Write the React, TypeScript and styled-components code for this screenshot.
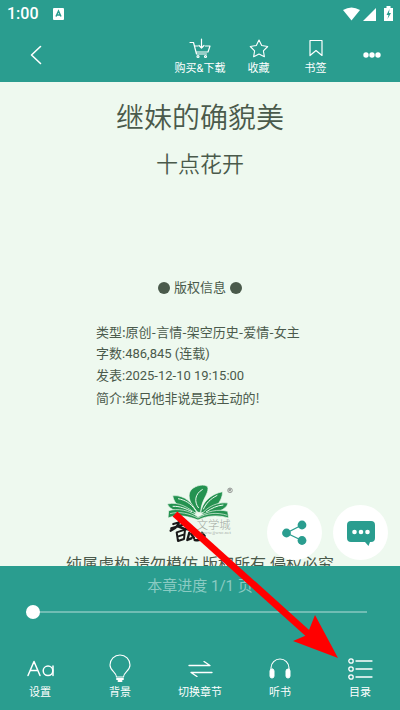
import React from 'react';
import styled, { createGlobalStyle } from 'styled-components';

const TEAL = '#2a9d8f';
const INK = '#4a5a4b';

const GlobalStyle = createGlobalStyle`
  * { box-sizing: border-box; }
  html, body { margin: 0; padding: 0; }
  body {
    background: #eef9ef;
    font-family: Roboto, "Noto Sans CJK SC", sans-serif;
  }
  button { font: inherit; color: inherit; background: none; border: 0; padding: 0; margin: 0; cursor: pointer; }
  svg { display: block; }
`;

const Page = styled.div`
  position: relative;
  height: 100vh;
  display: flex;
  flex-direction: column;
  overflow: hidden;
  background: #eef9ef;
  color: ${INK};
`;

const TopPanel = styled.header`
  flex: none;
  background: ${TEAL};
  color: #fff;
`;

const StatusBar = styled.div`
  height: 28px;
  padding: 0 6px 0 7px;
  display: flex;
  align-items: center;
  gap: 14px;
`;

const Clock = styled.time`
  font-size: 16px;
  line-height: 28px;
  font-weight: 500;
`;

const StatusIcons = styled.div`
  margin-left: auto;
`;

const Toolbar = styled.nav`
  height: 54px;
  display: flex;
  align-items: stretch;
`;

const BackButton = styled.button`
  width: 72px;
  display: grid;
  place-items: center;
  margin-right: auto;
`;

const ToolbarAction = styled.button<{ $width: number }>`
  width: ${(p) => p.$width}px;
  display: flex;
  flex-direction: column;
  align-items: center;
  justify-content: flex-start;
  gap: 1px;
  padding-top: 10px;
  font-size: 11px;
  line-height: 18px;
  white-space: nowrap;
`;

const MoreButton = styled.button`
  width: 56px;
  display: grid;
  place-items: center;
`;

const Reader = styled.main`
  flex: 1;
  min-height: 0;
  overflow: hidden;
  display: flex;
  flex-direction: column;
  align-items: center;
`;

const Title = styled.h1`
  margin: 16px 0 0;
  font-size: 28px;
  line-height: 42px;
  font-weight: 350;
`;

const Author = styled.h2`
  margin: 9px 0 0;
  font-size: 22px;
  line-height: 32px;
  font-weight: 350;
`;

const Copyright = styled.h3`
  margin: 96px 0 0;
  display: flex;
  align-items: center;
  gap: 4px;
  font-size: 13px;
  line-height: 22px;
  font-weight: 400;
`;

const Dot = styled.i`
  width: 12px;
  height: 12px;
  border-radius: 50%;
  background: ${INK};
`;

const Details = styled.div`
  margin-top: 22px;
  align-self: stretch;
  padding: 0 24%;
  font-size: 13px;
  line-height: 22px;
  white-space: nowrap;
`;

const Detail = styled.p<{ $numeric?: boolean }>`
  margin: 0;
  font-family: ${(p) => (p.$numeric ? 'Roboto, ' : '')}"Noto Sans CJK SC", sans-serif;
`;

const Brand = styled.div`
  margin: 71px 0 0 3px;
`;

const Notice = styled.p`
  margin: 4px 0 0;
  font-size: 16px;
  line-height: 22px;
  white-space: nowrap;
`;

const Floating = styled.div`
  position: absolute;
  right: 12px;
  bottom: 150px;
  display: flex;
  gap: 11px;
`;

const RoundButton = styled.button`
  width: 55px;
  height: 55px;
  border-radius: 50%;
  background: #fff;
  display: grid;
  place-items: center;
`;

const BottomPanel = styled.footer`
  flex: none;
  background: ${TEAL};
  color: #fff;
  padding-bottom: 8px;
`;

const ProgressLabel = styled.label`
  display: block;
  padding-top: 8px;
  text-align: center;
  font-size: 15px;
  line-height: 24px;
  color: #8acbc3;
`;

const ProgressRow = styled.div`
  padding: 7px 33px 0 26px;
`;

const Slider = styled.input`
  display: block;
  appearance: none;
  width: 100%;
  height: 14px;
  margin: 0;
  background: linear-gradient(#70bdb4, #70bdb4) center / 100% 2px no-repeat;
  &::-webkit-slider-thumb {
    appearance: none;
    width: 14px;
    height: 14px;
    border-radius: 50%;
    background: #fff;
  }
`;

const Tabs = styled.nav`
  display: grid;
  grid-template-columns: repeat(5, 1fr);
  margin-top: 34px;
`;

const Tab = styled.button`
  display: flex;
  flex-direction: column;
  align-items: center;
  font-size: 11px;
  line-height: 18px;
`;

const TabIcon = styled.span`
  height: 31px;
  display: grid;
  place-items: center;
`;

const Pointer = styled.svg`
  position: absolute;
  right: 54px;
  bottom: 50px;
  pointer-events: none;
`;

const line = { fill: 'none', stroke: '#fff', strokeLinecap: 'round', strokeLinejoin: 'round' } as const;

const InputBadge = () => (
  <svg width="11" height="12" viewBox="0 0 11 12">
    <rect width="11" height="12" rx="1" fill="#fff" />
    <path d="M3 8.500 5.500 3 8 8.500M4 7h3" fill="none" stroke={TEAL} strokeWidth="1.500" />
  </svg>
);

const SystemIcons = () => (
  <svg width="52" height="16" viewBox="0 0 52 16" fill="#fff">
    <path d="M1 4Q9.500-1 18 4L9.500 14.500Z" />
    <path d="M34 2V15H21Z" />
    <path d="M44.500 0h4v2h2.500v13h-9V2h2.500Z" />
    <path d="m47.500 3-3 6h2l-1 4 3.500-6h-2Z" fill={TEAL} />
  </svg>
);

const CartIcon = () => (
  <svg width="22" height="21" viewBox="0 0 22 21" {...line} strokeWidth="1.200">
    <path d="M1 4.500h3.500l3 11.500h10M6 8h3M16.500 8H21l-2 6H7" />
    <path d="M12.500 1v8.500M10 7.500l2.500 2.500L15 7.500" />
    <circle cx="9" cy="18.500" r="1" /><circle cx="16.500" cy="18.500" r="1" />
  </svg>
);

const StarIcon = () => (
  <svg width="20" height="21" viewBox="0 0 20 21" {...line} strokeWidth="1.100">
    <path d="m10 2 2.700 5.500 6 1-4.300 4.300 1 6L10 16l-5.400 2.800 1-6L1.300 8.500l6-1Z" />
  </svg>
);

const BookmarkIcon = () => (
  <svg width="14" height="21" viewBox="0 0 14 21" {...line} strokeWidth="1.200">
    <path d="M1 2.500h12v15L7 12.500 1 17.500Z" />
  </svg>
);

const ShareIcon = () => (
  <svg width="26" height="26" viewBox="0 0 26 26" fill={TEAL}>
    <path d="M20 5 4.500 13 20 20.500" fill="none" stroke={TEAL} strokeWidth="1.300" />
    <circle cx="4.500" cy="13" r="4.400" /><circle cx="20" cy="5" r="4.400" /><circle cx="20" cy="20.500" r="4.400" />
  </svg>
);

const ChatIcon = () => (
  <svg width="28" height="26" viewBox="0 0 28 26">
    <path d="M4 1h20a4 4 0 0 1 4 4v13a4 4 0 0 1-4 4h-1l-1.500 4-3.500-4H4a4 4 0 0 1-4-4V5a4 4 0 0 1 4-4Z" fill={TEAL} />
    <g fill="#fff"><circle cx="7.500" cy="12" r="2.300" /><circle cx="14" cy="12" r="2.300" /><circle cx="20.500" cy="12" r="2.300" /></g>
  </svg>
);

const TypeIcon = () => (
  <svg width="27" height="17" viewBox="0 0 27 17" {...line} strokeWidth="1.500">
    <path d="m1 15.500 6-14 6 14M3.500 10.500h7M26 6v9.500" />
    <circle cx="21" cy="10.800" r="4.800" />
  </svg>
);

const BulbIcon = () => (
  <svg width="22" height="29" viewBox="0 0 22 29" {...line} strokeWidth="1.100">
    <path d="M7.500 23c0-5-6.500-6-6.500-12a10 10 0 0 1 20 0c0 6-6.500 7-6.500 12Z" />
    <path d="M8 25h6M9.500 27h3" strokeWidth="2" />
  </svg>
);

const SwapIcon = () => (
  <svg width="25" height="16" viewBox="0 0 25 16" {...line} strokeWidth="1.300">
    <path d="M1 4.500h21l-6-4M24 11.500H3l6 4" />
  </svg>
);

const HeadphonesIcon = () => (
  <svg width="22" height="21" viewBox="0 0 22 21" {...line}>
    <path d="M2 13v-3a9 9 0 0 1 18 0v3" strokeWidth="1.100" />
    <rect x="1" y="11" width="4" height="9" rx="2" fill="#fff" />
    <rect x="17" y="11" width="4" height="9" rx="2" fill="#fff" />
  </svg>
);

const ListIcon = () => (
  <svg width="25" height="22" viewBox="0 0 25 22" {...line} strokeWidth="1.300">
    <circle cx="3" cy="3" r="2.200" /><circle cx="3" cy="11" r="2.200" /><circle cx="3" cy="19" r="2.200" />
    <path d="M8 3h16M8 11h16M8 19h16" />
  </svg>
);

const BrandLogo = () => (
  <svg width="75" height="70" viewBox="0 0 225 210" role="img" aria-label="文学城">
    <g fill="#249250" stroke="#eef9ef" strokeWidth="2">
      <path d="M102 97C74 70 66 38 88 24c16-11 42-12 44 0 1 20-20 35-22 73Z" />
      <path d="M98 99C88 70 62 44 26 47c5 28 28 45 72 52Z" />
      <path d="M110 99c4-32 28-56 66-64-2 32-22 54-66 64Z" />
      <path d="M98 103C72 82 44 64 10 72c6 18 38 28 88 31Z" />
      <path d="M112 103c20-24 50-38 80-34-4 20-36 32-80 34Z" />
      <path d="M102 111C76 90 40 84 14 92l-2 22c28-12 60-6 90 6 28-14 60-16 92-6l-3-20c-30-8-60 0-89 17Z" />
    </g>
    <g fill="none" stroke="#eef9ef" strokeWidth="3">
      <path d="M104 84C90 66 92 42 116 28M94 90C80 70 64 60 42 56M118 88c8-18 22-32 42-42M84 95C66 86 48 78 26 79M126 96c18-12 32-19 52-21" />
      <path d="M18 101c30-8 58 0 84 13 26-15 58-18 88-8" strokeWidth="2" />
    </g>
    <circle cx="198" cy="31" r="7" fill="none" stroke="#777" strokeWidth="2" />
    <path d="M195 35v-8h5v4h-5M198 31l3 4" stroke="#777" strokeWidth="2" fill="none" />
    <g fill="none" stroke="#181818" strokeLinecap="round" strokeLinejoin="round">
      <path d="m28 132 32-9M46 120c0 12-8 24-26 32M22 145l42-13M44 140c12 6 24 10 38 8" strokeWidth="7" />
      <path d="m38 157 25-8-3 28-18 6Z M43 169l16-5" strokeWidth="6" />
      <path d="m76 158-6 22 12-5M82 162l8 12M92 180c14 2 22 0 30-5M114 158l8 10" strokeWidth="7" />
    </g>
    <text x="98" y="147" fontSize="34" fontWeight="300" fill="#9fa8a0" fontFamily="Noto Sans CJK SC">文学城</text>
    <text x="110" y="163" fontSize="15" fill="#a7aea7" fontFamily="Liberation Serif">www.jjwxc.net</text>
  </svg>
);

const actions = [
  { label: '购买&下载', width: 60, icon: <CartIcon /> },
  { label: '收藏', width: 57, icon: <StarIcon /> },
  { label: '书签', width: 57, icon: <BookmarkIcon /> },
];

const details = [
  { text: '类型:原创-言情-架空历史-爱情-女主' },
  { text: '字数:486,845 (连载)', numeric: true },
  { text: '发表:2025-12-10 19:15:00', numeric: true },
  { text: '简介:继兄他非说是我主动的!' },
];

const tabs = [
  { label: '设置', icon: <TypeIcon /> },
  { label: '背景', icon: <BulbIcon /> },
  { label: '切换章节', icon: <SwapIcon /> },
  { label: '听书', icon: <HeadphonesIcon /> },
  { label: '目录', icon: <ListIcon /> },
];

export default function App() {
  return (
    <Page>
      <GlobalStyle />
      <TopPanel>
        <StatusBar>
          <Clock>1:00</Clock>
          <InputBadge />
          <StatusIcons><SystemIcons /></StatusIcons>
        </StatusBar>
        <Toolbar>
          <BackButton aria-label="返回">
            <svg width="12" height="20" viewBox="0 0 12 20" {...line} strokeWidth="1.600"><path d="m10.500 1.500-9 8.500 9 8.500" /></svg>
          </BackButton>
          {actions.map((a) => (
            <ToolbarAction key={a.label} $width={a.width}>{a.icon}{a.label}</ToolbarAction>
          ))}
          <MoreButton aria-label="更多">
            <svg width="18" height="6" viewBox="0 0 18 6" fill="#fff"><circle cx="3" cy="3" r="2.700" /><circle cx="9" cy="3" r="2.700" /><circle cx="15" cy="3" r="2.700" /></svg>
          </MoreButton>
        </Toolbar>
      </TopPanel>
      <Reader>
        <Title>继妹的确貌美</Title>
        <Author>十点花开</Author>
        <Copyright><Dot />版权信息<Dot /></Copyright>
        <Details>
          {details.map((d) => <Detail key={d.text} $numeric={d.numeric}>{d.text}</Detail>)}
        </Details>
        <Brand><BrandLogo /></Brand>
        <Notice>纯属虚构 请勿模仿 版权所有 侵权必究</Notice>
      </Reader>
      <Floating>
        <RoundButton aria-label="分享"><ShareIcon /></RoundButton>
        <RoundButton aria-label="评论"><ChatIcon /></RoundButton>
      </Floating>
      <BottomPanel>
        <ProgressLabel htmlFor="progress">本章进度 1/1 页</ProgressLabel>
        <ProgressRow>
          <Slider id="progress" type="range" min={0} max={100} defaultValue={0} />
        </ProgressRow>
        <Tabs>
          {tabs.map((t) => (
            <Tab key={t.label}><TabIcon>{t.icon}</TabIcon>{t.label}</Tab>
          ))}
        </Tabs>
      </BottomPanel>
      <Pointer width="174" height="150" viewBox="0 0 174 150" aria-hidden="true">
        <path d="M3 4 142 129" stroke="#f00" strokeWidth="7" fill="none" />
        <path d="M143 105 166 148 121 131l14-6Z" fill="#f00" />
      </Pointer>
    </Page>
  );
}
